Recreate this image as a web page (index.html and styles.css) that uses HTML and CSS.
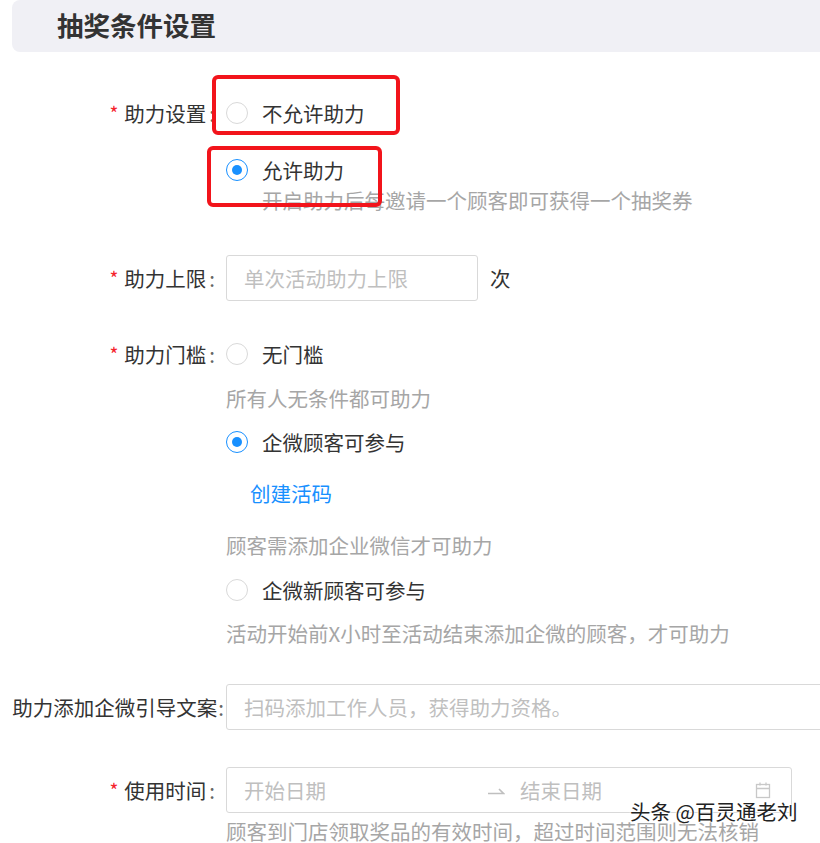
FILE: index.html
```html
<!DOCTYPE html>
<html lang="zh">
<head>
<meta charset="utf-8">
<title>抽奖条件设置</title>
<link rel="stylesheet" href="styles.css">
</head>
<body>
<div class="page">
  <div class="header"><h2 class="title">抽奖条件设置</h2></div>

  <div class="form">
    <div class="row row-assist">
      <div class="label"><span class="req">*</span>助力设置<span class="colon">:</span></div>
      <div class="control">
        <label class="radio"><span class="dot"></span><span class="rtext">不允许助力</span></label>
        <label class="radio checked gap27"><span class="dot"></span><span class="rtext">允许助力</span></label>
        <div class="help help-indent">开启助力后每邀请一个顾客即可获得一个抽奖券</div>
      </div>
    </div>

    <div class="row row-limit">
      <div class="label label-input"><span class="req">*</span>助力上限<span class="colon">:</span></div>
      <div class="control inline">
        <div class="input short"><span class="ph">单次活动助力上限</span></div>
        <span class="unit">次</span>
      </div>
    </div>

    <div class="row row-threshold">
      <div class="label"><span class="req">*</span>助力门槛<span class="colon">:</span></div>
      <div class="control">
        <label class="radio"><span class="dot"></span><span class="rtext">无门槛</span></label>
        <div class="help m16">所有人无条件都可助力</div>
        <label class="radio checked m16"><span class="dot"></span><span class="rtext">企微顾客可参与</span></label>
        <a class="link">创建活码</a>
        <div class="help m26">顾客需添加企业微信才可助力</div>
        <label class="radio m17"><span class="dot"></span><span class="rtext">企微新顾客可参与</span></label>
        <div class="help m15">活动开始前X小时至活动结束添加企微的顾客，才可助力</div>
      </div>
    </div>

    <div class="row row-guide">
      <div class="label label-input label-long">助力添加企微引导文案<span class="colon">:</span></div>
      <div class="control">
        <div class="input wide"><span class="ph">扫码添加工作人员，获得助力资格。</span></div>
      </div>
    </div>

    <div class="row row-time">
      <div class="label label-input"><span class="req">*</span>使用时间<span class="colon">:</span></div>
      <div class="control">
        <div class="input range">
          <span class="ph date-start">开始日期</span>
          <svg class="sep" width="18" height="12" viewBox="0 0 18 12"><path d="M1 9.5H16.5L12 5" fill="none" stroke="#bfbfbf" stroke-width="1.6"/></svg>
          <span class="ph date-end">结束日期</span>
          <svg class="cal" width="16" height="18" viewBox="0 0 16 18"><rect x="1.5" y="3.5" width="13" height="13" fill="none" stroke="#c8c8c8" stroke-width="1.3"/><path d="M1.5 7.5H14.5M5 1.5V4.5M11 1.5V4.5" fill="none" stroke="#c8c8c8" stroke-width="1.3"/></svg>
        </div>
        <div class="help m5">顾客到门店领取奖品的有效时间，超过时间范围则无法核销</div>
      </div>
    </div>
  </div>

  <div class="mark mark1"></div>
  <div class="mark mark2"></div>
  <div class="watermark">头条 @百灵通老刘</div>
</div>
</body>
</html>
```

FILE: styles.css
```css
html, body {
  margin: 0;
  padding: 0;
  background: #fff;
}
.page {
  position: relative;
  width: 820px;
  height: 843px;
  overflow: hidden;
  font-family: "Noto Sans CJK SC", "Noto Sans", sans-serif;
  font-size: 20.5px;
  color: #333;
}
.header {
  margin-left: 12px;
  height: 52px;
  background: #f0f0f5;
  border-radius: 8px 0 0 8px;
  padding-left: 45px;
}
.title {
  margin: 0;
  font-size: 26.5px;
  font-weight: 700;
  line-height: 50px;
  color: #333;
}
.form {
  padding-top: 46px;
}
.row {
  display: grid;
  grid-template-columns: 226px 1fr;
}
.label {
  text-align: right;
  white-space: nowrap;
  line-height: 30px;
  padding-right: 11px;
  box-sizing: border-box;
  color: #333;
}
.label-input {
  line-height: 46px;
}
.label-long {
  padding-right: 2px;
}
.label-long .colon {
  margin-left: 1px;
}
.req {
  color: #f5222d;
  font-size: 19px;
  margin-right: 6px;
  vertical-align: 1px;
}
.colon {
  margin-left: 3px;
  color: #666;
}
.control {
  display: flex;
  flex-direction: column;
  align-items: flex-start;
}
.control.inline {
  flex-direction: row;
  align-items: center;
}
.radio {
  display: flex;
  align-items: center;
  height: 30px;
  line-height: 30px;
}
.dot {
  width: 22px;
  height: 22px;
  box-sizing: border-box;
  border: 1.5px solid #d9d9d9;
  border-radius: 50%;
  margin-right: 14px;
  position: relative;
  background: #fff;
}
.radio.checked .dot {
  border-color: #1890ff;
}
.radio.checked .dot::after {
  content: "";
  position: absolute;
  left: 4.5px;
  top: 4.5px;
  width: 10px;
  height: 10px;
  border-radius: 50%;
  background: #1890ff;
}
.rtext {
  color: #333;
}
.gap27 { margin-top: 27px; }
.help {
  color: #a6a6a6;
  line-height: 26px;
}
.help-indent {
  margin-left: 36px;
  margin-top: 2px;
}
.m5 { margin-top: 5px; }
.m15 { margin-top: 15px; }
.m16 { margin-top: 16px; }
.m17 { margin-top: 17px; }
.m26 { margin-top: 26px; }
.link {
  color: #1890ff;
  margin-left: 24px;
  margin-top: 23px;
  line-height: 26px;
}
.row-limit { margin-top: 42px; }
.row-threshold { margin-top: 38px; }
.row-guide { margin-top: 38px; }
.row-time { margin-top: 37px; }
.input {
  height: 46px;
  box-sizing: border-box;
  border: 1px solid #d9d9d9;
  border-radius: 3px;
  display: flex;
  align-items: center;
  padding-left: 17px;
  background: #fff;
}
.ph {
  color: #bfbfbf;
  white-space: nowrap;
}
.short { width: 252px; }
.wide { width: 620px; }
.unit {
  margin-left: 12px;
  color: #333;
}
.range {
  width: 566px;
  padding-right: 20px;
}
.date-start { width: 243px; }
.sep { margin-right: 15px; flex: none; }
.date-end { flex: 1; }
.cal { flex: none; }
.mark {
  position: absolute;
  border: 4px solid #f2141b;
  border-radius: 6px;
  box-sizing: border-box;
}
.mark1 { left: 212px; top: 75px; width: 188px; height: 60px; }
.mark2 { left: 207px; top: 146px; width: 175px; height: 61px; }
.watermark {
  position: absolute;
  left: 630px;
  top: 797px;
  font-size: 20.5px;
  line-height: 28px;
  color: #222;
  white-space: nowrap;
  text-shadow: 0 0 2px #fff, 0 0 2px #fff, 0 0 3px #fff;
}
```
